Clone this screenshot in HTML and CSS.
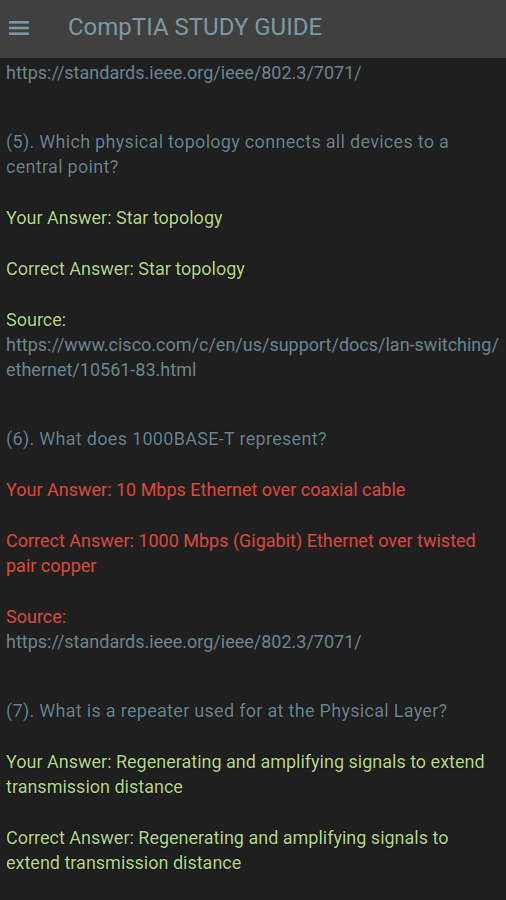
FILE: index.html
```html
<!DOCTYPE html>
<html>
<head>
<meta charset="utf-8">
<link rel="stylesheet" href="styles.css">
</head>
<body>
<header class="bar">
  <svg class="menu" width="20" height="14" viewBox="0 0 20 14"><rect x="0" y="0" width="20" height="2.6" fill="#7d98a6"/><rect x="0" y="5.7" width="20" height="2.6" fill="#7d98a6"/><rect x="0" y="11.4" width="20" height="2.6" fill="#7d98a6"/></svg>
  <h1 class="title">CompTIA STUDY GUIDE</h1>
</header>
<main class="content">
  <p class="url">https://standards.ieee.org/ieee/802.3/7071/</p>

  <section class="q">
    <p class="question">(5). Which physical topology connects all devices to a central point?</p>
    <p class="ok">Your Answer: Star topology</p>
    <p class="ok">Correct Answer: Star topology</p>
    <div class="src"><p class="ok">Source:</p><p class="url">https://www.cisco.com/c/en/us/support/docs/lan-switching/ethernet/10561-83.html</p></div>
  </section>

  <section class="q">
    <p class="question">(6). What does 1000BASE-T represent?</p>
    <p class="bad">Your Answer: 10 Mbps Ethernet over coaxial cable</p>
    <p class="bad">Correct Answer: 1000 Mbps (Gigabit) Ethernet over twisted pair copper</p>
    <div class="src"><p class="bad">Source:</p><p class="url">https://standards.ieee.org/ieee/802.3/7071/</p></div>
  </section>

  <section class="q">
    <p class="question">(7). What is a repeater used for at the Physical Layer?</p>
    <p class="ok">Your Answer: Regenerating and amplifying signals to extend transmission distance</p>
    <p class="ok">Correct Answer: Regenerating and amplifying signals to extend transmission distance</p>
  </section>
</main>
</body>
</html>
```
FILE: styles.css
```css
html, body {
  margin: 0;
  padding: 0;
  background: #1f1f1f;
  height: 100%;
  overflow: hidden;
}
body {
  font-family: Roboto, "Noto Sans", sans-serif;
}
.bar {
  height: 58px;
  background: #404040;
  display: flex;
  align-items: center;
  padding-left: 9px;
  box-sizing: border-box;
}
.menu {
  flex: none;
  position: relative;
  top: -1px;
}
.title {
  margin: 0 0 0 39px;
  font-size: 24px;
  font-weight: 400;
  color: #7d98a6;
  position: relative;
  top: -2px;
}
.content {
  padding: 2px 0 0 6px;
  font-size: 18px;
  line-height: 25px;
}
p {
  margin: 0;
}
.q {
  margin-top: 44px;
}
.q > * + * {
  margin-top: 26px;
}
.url, .question {
  color: #6b8591;
}
.question {
  letter-spacing: 0.3px;
  text-shadow: 0 0 1px #000;
}
.url {
  word-break: break-all;
}
.ok {
  color: #b8d98b;
  text-shadow: 0 0 1px #000, 0 0 1px #000;
}
.bad {
  color: #db4a3b;
}
```
